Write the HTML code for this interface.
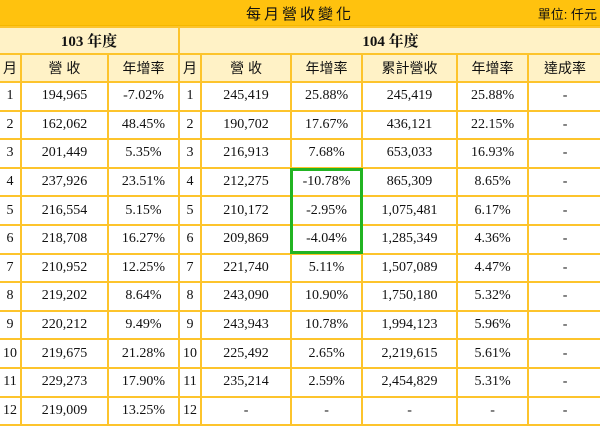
<!DOCTYPE html>
<html><head><meta charset="utf-8"><style>
body{margin:0;width:600px;height:426px;overflow:hidden;background:#fff;font-family:"Liberation Serif","Noto Serif CJK TC",serif;color:#111;position:relative}
.title{position:absolute;left:0;top:0;width:600px;height:25px;background:#FFC20E;border-bottom:1px solid #F5B800}
.title .t{position:absolute;left:0;width:600px;text-align:center;top:3px;font-size:15px;letter-spacing:3px;font-family:"Liberation Sans","Noto Sans CJK TC",sans-serif}
.title .u{position:absolute;right:3px;top:4px;font-size:13px;font-family:"Liberation Sans","Noto Sans CJK TC",sans-serif}
table{position:absolute;left:0;top:26px;border-collapse:collapse;table-layout:fixed;width:602px}
td{border:2px solid #FDC42C;text-align:center;font-size:14px;padding:0;height:26.6px;overflow:hidden;white-space:nowrap}
tr.y td{background:#FFF2C6;font-weight:bold;font-size:15px;height:25px}
tr.h td{background:#FFF2C6;height:26px;font-family:"Liberation Sans","Noto Sans CJK TC",sans-serif;font-size:14px}
td:first-child{border-left:none}
.g{position:absolute;left:290px;top:168px;width:67px;height:80px;border:3px solid #22B422}
</style></head><body>
<div class="title"><div class="t">每月營收變化</div><div class="u">單位: 仟元</div></div>
<table>
<colgroup><col style="width:21px"><col style="width:87px"><col style="width:71px"><col style="width:22px"><col style="width:90px"><col style="width:71px"><col style="width:95px"><col style="width:71px"><col style="width:74px"></colgroup>
<tr class="y"><td colspan="3">103 年度</td><td colspan="6">104 年度</td></tr>
<tr class="h"><td>月</td><td>營 收</td><td>年增率</td><td>月</td><td>營 收</td><td>年增率</td><td>累計營收</td><td>年增率</td><td>達成率</td></tr>
<tr><td>1</td><td>194,965</td><td>-7.02%</td><td>1</td><td>245,419</td><td>25.88%</td><td>245,419</td><td>25.88%</td><td>-</td></tr>
<tr><td>2</td><td>162,062</td><td>48.45%</td><td>2</td><td>190,702</td><td>17.67%</td><td>436,121</td><td>22.15%</td><td>-</td></tr>
<tr><td>3</td><td>201,449</td><td>5.35%</td><td>3</td><td>216,913</td><td>7.68%</td><td>653,033</td><td>16.93%</td><td>-</td></tr>
<tr><td>4</td><td>237,926</td><td>23.51%</td><td>4</td><td>212,275</td><td>-10.78%</td><td>865,309</td><td>8.65%</td><td>-</td></tr>
<tr><td>5</td><td>216,554</td><td>5.15%</td><td>5</td><td>210,172</td><td>-2.95%</td><td>1,075,481</td><td>6.17%</td><td>-</td></tr>
<tr><td>6</td><td>218,708</td><td>16.27%</td><td>6</td><td>209,869</td><td>-4.04%</td><td>1,285,349</td><td>4.36%</td><td>-</td></tr>
<tr><td>7</td><td>210,952</td><td>12.25%</td><td>7</td><td>221,740</td><td>5.11%</td><td>1,507,089</td><td>4.47%</td><td>-</td></tr>
<tr><td>8</td><td>219,202</td><td>8.64%</td><td>8</td><td>243,090</td><td>10.90%</td><td>1,750,180</td><td>5.32%</td><td>-</td></tr>
<tr><td>9</td><td>220,212</td><td>9.49%</td><td>9</td><td>243,943</td><td>10.78%</td><td>1,994,123</td><td>5.96%</td><td>-</td></tr>
<tr><td>10</td><td>219,675</td><td>21.28%</td><td>10</td><td>225,492</td><td>2.65%</td><td>2,219,615</td><td>5.61%</td><td>-</td></tr>
<tr><td>11</td><td>229,273</td><td>17.90%</td><td>11</td><td>235,214</td><td>2.59%</td><td>2,454,829</td><td>5.31%</td><td>-</td></tr>
<tr><td>12</td><td>219,009</td><td>13.25%</td><td>12</td><td>-</td><td>-</td><td>-</td><td>-</td><td>-</td></tr>
</table>
<div class="g"></div>
</body></html>
